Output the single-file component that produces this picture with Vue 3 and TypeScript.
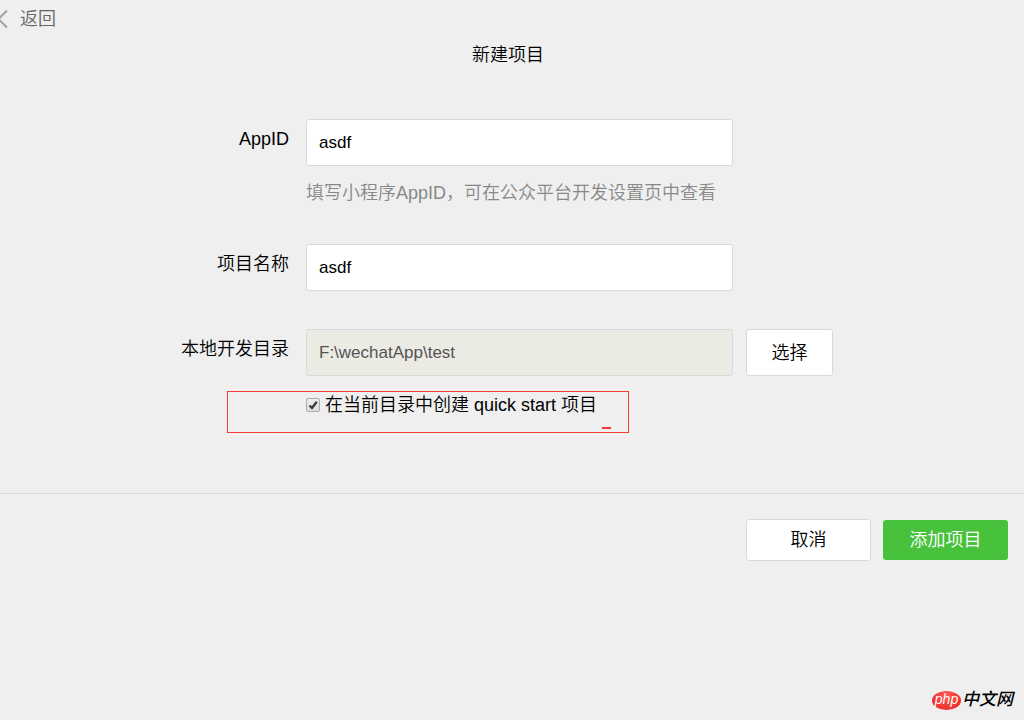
<script setup lang="ts">
import { ref } from 'vue'

const appId = ref('asdf')
const projectName = ref('asdf')
const directory = ref('F:\\wechatApp\\test')
const quickStart = ref(true)
</script>

<template>
  <main class="page">
    <header>
      <a class="back" href="#">
        <svg class="chevron" viewBox="0 0 8 20" aria-hidden="true">
          <path d="M7 1.5L-1.5 10L7 18.5" fill="none" stroke="#a3a3a3" stroke-width="2" />
        </svg>
        返回
      </a>
      <h1>新建项目</h1>
    </header>

    <form @submit.prevent>
      <div class="row first">
        <label class="name" for="appid">AppID</label>
        <input id="appid" v-model="appId" class="field" type="text" />
        <p class="hint">填写小程序AppID，可在公众平台开发设置页中查看</p>
      </div>

      <div class="row second">
        <label class="name" for="project">项目名称</label>
        <input id="project" v-model="projectName" class="field" type="text" />
      </div>

      <div class="row third">
        <label class="name" for="directory">本地开发目录</label>
        <input id="directory" v-model="directory" class="field locked" type="text" readonly />
        <button class="choose" type="button">选择</button>
        <div class="option">
          <label class="check">
            <input v-model="quickStart" type="checkbox" />
            <svg v-if="quickStart" class="tick" viewBox="0 0 14 14" aria-hidden="true">
              <path d="M3.5 7.5L6 10L10.8 3.8" fill="none" stroke="#3c3c3c" stroke-width="2.4" />
            </svg>
            <span>在当前目录中创建 quick start 项目</span>
          </label>
          <div class="mark"></div>
        </div>
      </div>

      <footer>
        <button class="cancel" type="button">取消</button>
        <button class="submit" type="submit">添加项目</button>
      </footer>
    </form>

    <div class="brand"><span class="oval">php</span><span class="site">中文网</span></div>
  </main>
</template>

<style>
body {
  background: #efefef;
}
</style>

<style scoped>
.page {
  position: relative;
  min-height: 100vh;
  overflow: hidden;
  background: #efefef;
  color: #000;
  font-family: "Liberation Sans", "Noto Sans CJK SC", sans-serif;
  font-size: 18px;
  font-weight: 350;
  line-height: 26px;
}

.page,
.page * {
  box-sizing: border-box;
}

input,
button {
  margin: 0;
  font: inherit;
  color: inherit;
}

.back {
  display: flex;
  align-items: center;
  gap: 12px;
  width: max-content;
  height: 38px;
  color: #666;
  text-decoration: none;
}

.chevron {
  width: 8px;
  height: 20px;
}

h1 {
  margin: 4px 8px 0 0;
  font-size: 18px;
  font-weight: inherit;
  text-align: center;
}

.row {
  display: grid;
  grid-template-columns: 293fr 427fr 278fr;
  column-gap: 13px;
}

.first {
  margin-top: 51px;
}

.second {
  margin-top: 38px;
}

.third {
  margin-top: 38px;
}

.name {
  padding: 7px 4px 0 0;
  text-align: right;
}

.field {
  width: 100%;
  height: 47px;
  padding: 0 12px;
  border: 1px solid #d9d9d9;
  border-radius: 3px;
  background: #fff;
  font-size: 17px;
  outline: none;
}

.locked {
  background: #ebebe4;
  color: #545454;
}

.hint {
  grid-column: 2 / 4;
  margin: 14px 0 0;
  color: #888;
}

button {
  padding: 0;
  border: 1px solid #d9d9d9;
  border-radius: 3px;
  background: #fff;
  cursor: pointer;
}

.choose {
  width: 87px;
  height: 47px;
}

.option {
  position: relative;
  grid-column: 2;
  margin-top: 16px;
}

.check {
  position: relative;
  display: flex;
  align-items: center;
  gap: 5px;
  white-space: nowrap;
}

.check input {
  width: 14px;
  height: 14px;
  appearance: none;
  border: 1px solid #ababab;
  border-radius: 2px;
  background: linear-gradient(#ededed, #dcdcdc);
}

.tick {
  position: absolute;
  left: 0;
  width: 14px;
  height: 14px;
  pointer-events: none;
}

.mark {
  position: absolute;
  top: -1px;
  left: -79px;
  width: 402px;
  height: 42px;
  border: 1px solid #fb3838;
  pointer-events: none;
}

.mark::after {
  content: "";
  position: absolute;
  right: 17px;
  bottom: 3px;
  width: 9px;
  height: 2px;
  background: #fb3838;
}

footer {
  display: flex;
  align-items: center;
  justify-content: flex-end;
  gap: 12px;
  margin-top: 75px;
  padding: 25px 16px 0;
  border-top: 1px solid #d9d9d9;
}

.cancel {
  width: 125px;
  height: 42px;
}

.submit {
  width: 125px;
  height: 40px;
  border: 0;
  background: #48c23d;
  color: #fff;
}

.brand {
  position: absolute;
  right: 11px;
  bottom: 10px;
  display: flex;
  align-items: center;
  gap: 1px;
  height: 20px;
  font-style: italic;
  line-height: 20px;
}

.oval {
  width: 29px;
  height: 19px;
  border-radius: 50%;
  background: radial-gradient(ellipse at 50% 25%, #ff5a50, #e8211f);
  color: #fff;
  font-size: 14px;
  font-weight: 400;
  line-height: 16px;
  text-align: center;
}

.site {
  font-size: 17px;
  font-weight: 500;
}
</style>
